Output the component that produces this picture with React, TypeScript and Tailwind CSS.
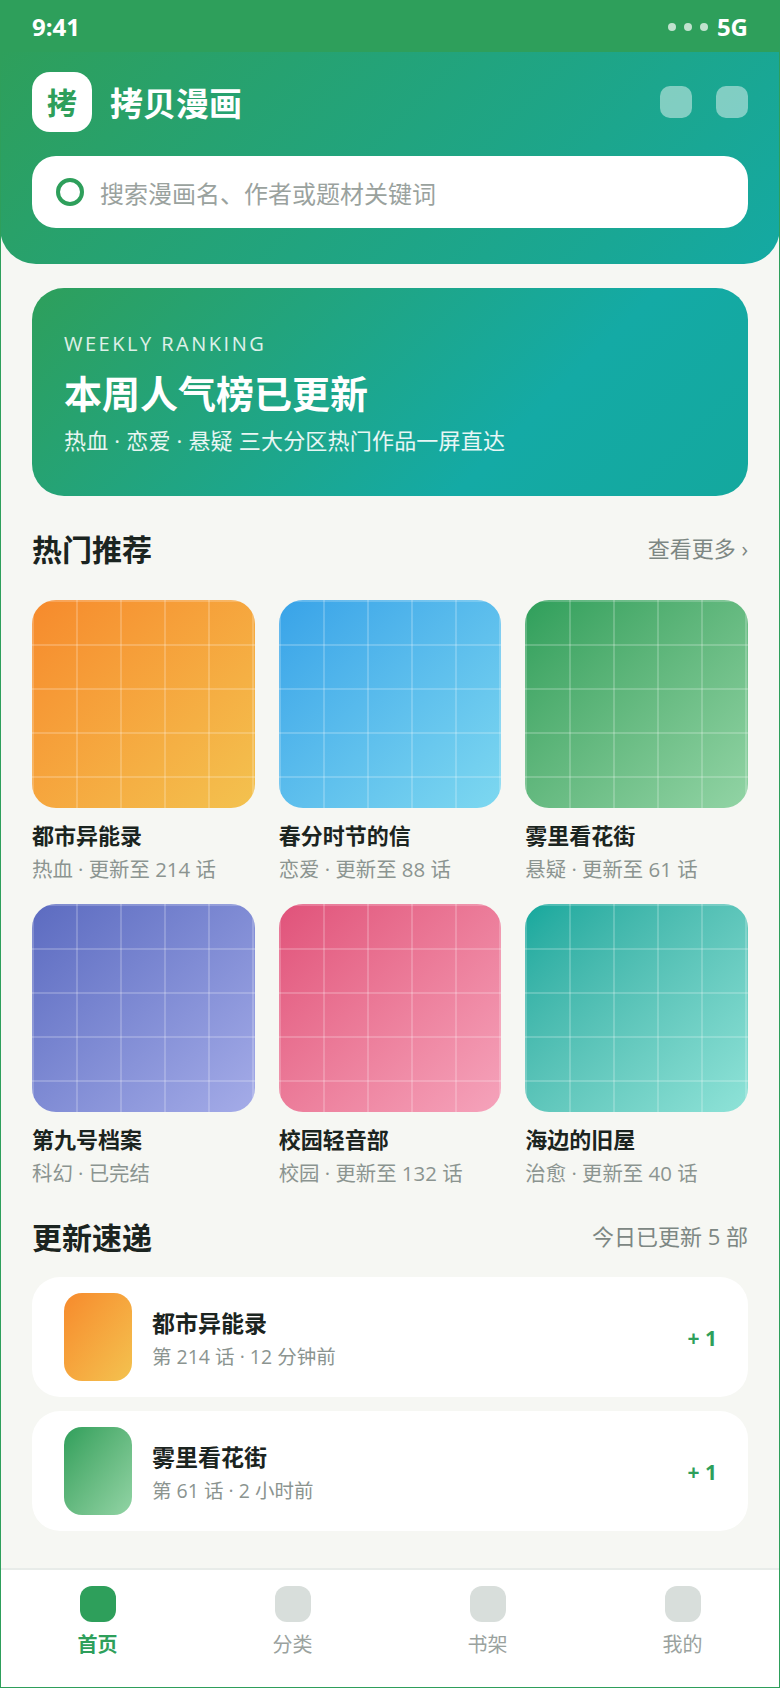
const cnSans = "font-['Open_Sans','Noto_Sans_CJK_SC',sans-serif]";

type Comic = {
  title: string;
  meta: string;
  cover: string;
};

const hotComics: Comic[] = [
  { title: "都市异能录", meta: "热血 · 更新至 214 话", cover: "from-[#f68a2c] to-[#f3c24f]" },
  { title: "春分时节的信", meta: "恋爱 · 更新至 88 话", cover: "from-[#38a3e8] to-[#7dd8f0]" },
  { title: "雾里看花街", meta: "悬疑 · 更新至 61 话", cover: "from-[#2e9f5b] to-[#92d4a5]" },
  { title: "第九号档案", meta: "科幻 · 已完结", cover: "from-[#5c6bc0] to-[#a5ace8]" },
  { title: "校园轻音部", meta: "校园 · 更新至 132 话", cover: "from-[#e0527a] to-[#f5a3bb]" },
  { title: "海边的旧屋", meta: "治愈 · 更新至 40 话", cover: "from-[#12a89d] to-[#8fe3d8]" },
];

const updates = [
  { title: "都市异能录", meta: "第 214 话 · 12 分钟前", cover: "from-[#f68a2c] to-[#f3c24f]" },
  { title: "雾里看花街", meta: "第 61 话 · 2 小时前", cover: "from-[#2e9f5b] to-[#92d4a5]" },
];

const tabs = [
  { label: "首页", active: true },
  { label: "分类", active: false },
  { label: "书架", active: false },
  { label: "我的", active: false },
];

function SectionHead({ title, note }: { title: string; note: string }) {
  return (
    <div className="flex items-center justify-between">
      <h2 className="text-[30px] leading-[40px] font-bold text-[#1b2420]">{title}</h2>
      <span className="pb-[4px] text-[22px] leading-[32px] text-[#7d8783]">{note}</span>
    </div>
  );
}

function ComicCard({ comic }: { comic: Comic }) {
  return (
    <div>
      <div className={`h-[208px] rounded-[24px] bg-gradient-to-br ${comic.cover} relative overflow-hidden`}>
        <div className="absolute inset-0 bg-[linear-gradient(rgba(255,255,255,0.2)_2px,transparent_2px),linear-gradient(90deg,rgba(255,255,255,0.2)_2px,transparent_2px)] bg-[size:44px_44px]" />
      </div>
      <div className="mt-[12px] text-[22px] leading-[30px] font-bold text-[#1b2420]">{comic.title}</div>
      <div className="mt-[5px] text-[20.4px] leading-[28px] text-[#8b9490]">{comic.meta}</div>
    </div>
  );
}

export default function App() {
  return (
    <div className={`h-[1688px] w-[780px] outline outline-1 -outline-offset-1 outline-[#2e9f5b] bg-[#f6f7f3] flex flex-col overflow-hidden ${cnSans}`}>
      <div className="h-[52px] shrink-0 bg-[#2e9f5b] flex items-center justify-between px-[32px] pt-[2px] text-white">
        <span className="text-[24px] font-bold">9:41</span>
        <div className="flex items-center gap-[8px]">
          <span className="size-[8px] rounded-full bg-white/70" />
          <span className="size-[8px] rounded-full bg-white/70" />
          <span className="size-[8px] rounded-full bg-white/70" />
          <span className="ml-[1px] text-[24px] font-bold">5G</span>
        </div>
      </div>

      <header className="h-[212px] shrink-0 rounded-b-[36px] bg-[linear-gradient(135deg,#2e9f5b,#14a9a3)] px-[32px] pt-[20px]">
        <div className="flex items-center justify-between">
          <div className="flex items-center gap-[18px]">
            <div className="size-[60px] rounded-[18px] bg-white flex items-center justify-center text-[30px] font-bold text-[#2e9f5b]">拷</div>
            <div className="pt-[4px] text-[33px] font-bold text-white">拷贝漫画</div>
          </div>
          <div className="flex gap-[24px]">
            <span className="size-[32px] rounded-[10px] bg-white/45" />
            <span className="size-[32px] rounded-[10px] bg-white/45" />
          </div>
        </div>
        <div className="mt-[24px] h-[72px] rounded-[24px] bg-white flex items-center gap-[16px] pl-[24px]">
          <span className="size-[28px] rounded-full border-[4px] border-[#2e9f5b]" />
          <span className="pt-[4px] text-[24px] text-[#9aa29e]">搜索漫画名、作者或题材关键词</span>
        </div>
      </header>

      <main className="flex-1 px-[32px] pt-[24px]">
        <section className="h-[208px] rounded-[32px] bg-[linear-gradient(135deg,#2e9f5b_0%,#14aaa5_68%,#14a89e_100%)] px-[32px] pt-[42px] text-white">
          <div className="text-[20px] leading-[28px] tracking-[2.5px] text-white/85">WEEKLY RANKING</div>
          <div className="mt-[9px] text-[38px] leading-[52px] font-bold">本周人气榜已更新</div>
          <div className="mt-[5px] text-[22px] leading-[32px] tracking-[0.2px] text-white/90">热血 · 恋爱 · 悬疑 三大分区热门作品一屏直达</div>
        </section>

        <div className="mt-[34px]">
          <SectionHead title="热门推荐" note="查看更多 ›" />
        </div>
        <div className="mt-[30px] grid grid-cols-3 gap-x-[24px] gap-y-[21px]">
          {hotComics.map((comic) => (
            <ComicCard key={comic.title} comic={comic} />
          ))}
        </div>

        <div className="mt-[31px]">
          <SectionHead title="更新速递" note="今日已更新 5 部" />
        </div>
        <div className="mt-[19px] flex flex-col gap-[14px]">
          {updates.map((item) => (
            <div key={item.title} className="h-[120px] rounded-[28px] bg-white flex items-center px-[32px]">
              <div className={`h-[88px] w-[68px] rounded-[18px] bg-gradient-to-br ${item.cover}`} />
              <div className="ml-[20px] flex-1 pt-[3px]">
                <div className="text-[23px] leading-[32px] font-bold text-[#1b2420]">{item.title}</div>
                <div className="mt-[4px] text-[19.5px] leading-[28px] text-[#8b9490]">{item.meta}</div>
              </div>
              <span className="-mr-[1px] pt-[4px] text-[21px] font-bold text-[#2e9f5b]">+ 1</span>
            </div>
          ))}
        </div>
      </main>

      <nav className="h-[120px] shrink-0 border-t-2 border-[#e8ece9] bg-white grid grid-cols-4 pt-[16px]">
        {tabs.map((tab) => (
          <div key={tab.label} className="flex flex-col items-center">
            <span className={`size-[36px] rounded-[12px] ${tab.active ? "bg-[#2e9f5b]" : "bg-[#d8dedb]"}`} />
            <span className={`mt-[9px] text-[20px] leading-[28px] ${tab.active ? "font-bold text-[#2e9f5b]" : "text-[#9aa29e]"}`}>{tab.label}</span>
          </div>
        ))}
      </nav>
    </div>
  );
}
